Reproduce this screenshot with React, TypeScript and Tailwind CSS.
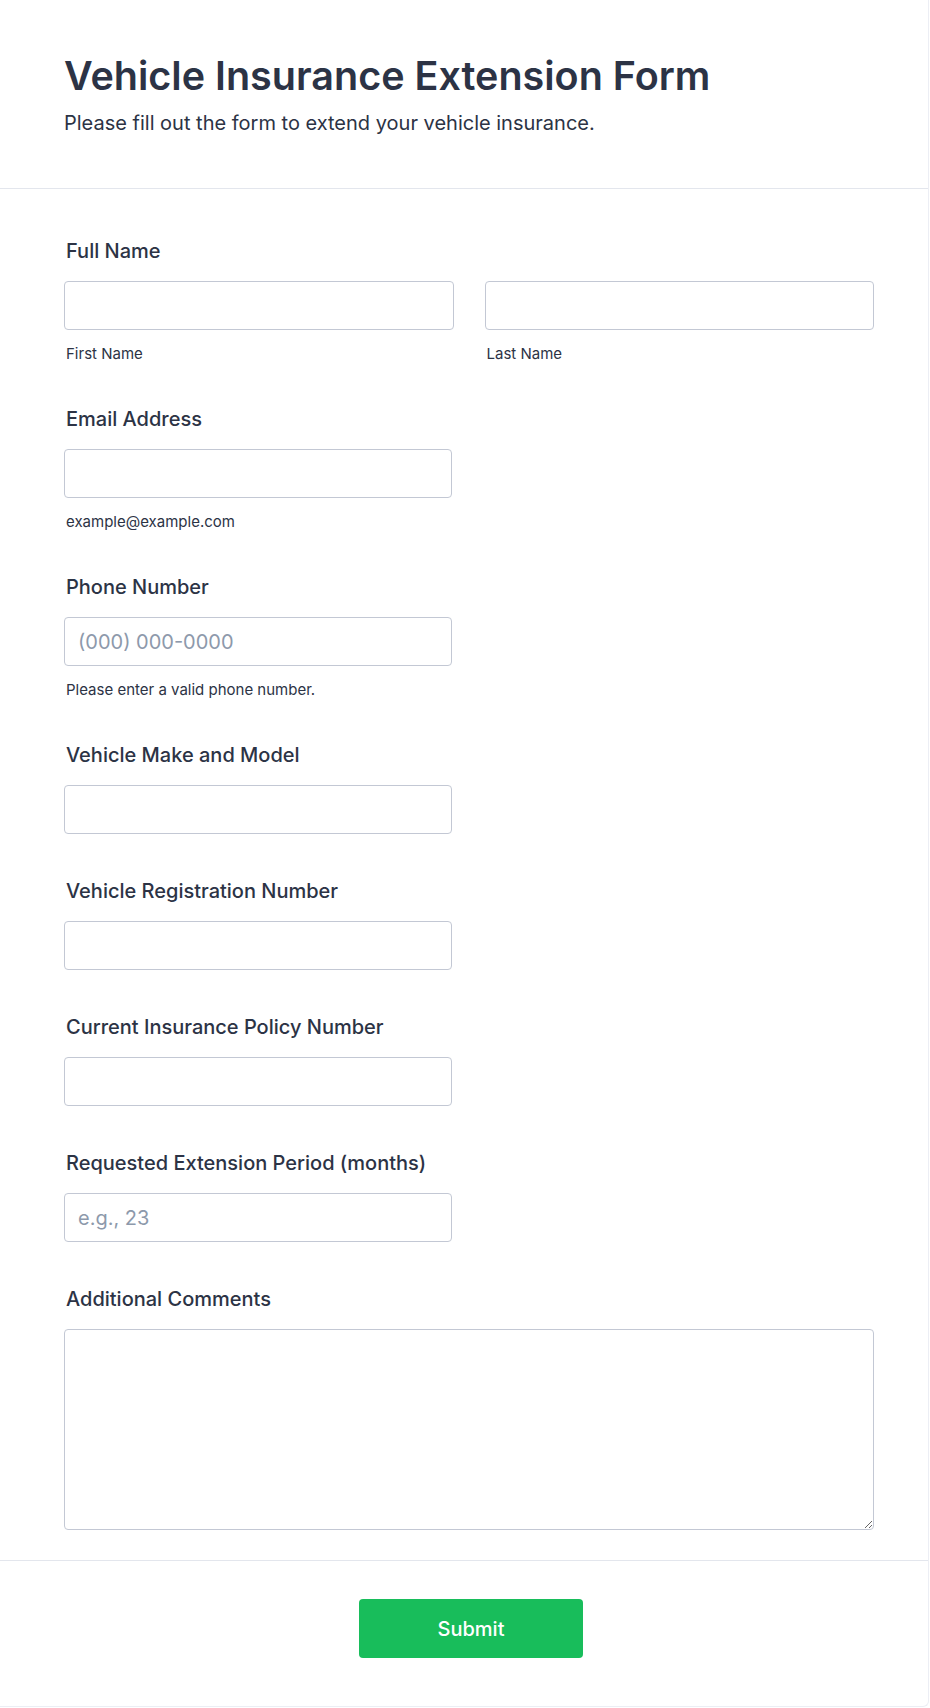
import React from "react";

const labelCls = "block pl-[2px] text-[20px] leading-[28px] font-medium text-[#2c3345] mb-4";
const inputCls =
  "block w-full h-[49px] border border-[#c3c8d4] rounded-[4px] bg-white px-[13px] text-[20px] text-[#2c3345] placeholder:text-[#8d99ab] outline-none focus:border-[#4c7dfb]";
const helperCls = "block pl-[2px] mt-4 text-[15px] leading-[16px] text-[#2c3345]";

type FieldProps = {
  label: string;
  placeholder?: string;
  helper?: string;
  type?: string;
};

const Field = ({ label, placeholder, helper, type = "text" }: FieldProps) => (
  <div>
    <label className={labelCls}>{label}</label>
    <div className="w-[388px]">
      <input type={type} placeholder={placeholder} className={inputCls} />
    </div>
    {helper && <span className={helperCls}>{helper}</span>}
  </div>
);

export default function App() {
  return (
    <div className="min-h-screen bg-white" style={{ fontFamily: "Inter, 'Noto Sans', sans-serif" }}>
      <div className="w-[929px] border-r border-b border-[#eceef4] rounded-br-md bg-white">
        {/* Header */}
        <div className="pt-[54px] pb-[51px] pl-[64px] pr-[54px] border-b border-[#e3e6ed]">
          <h1 className="text-[39.5px] leading-[44px] font-semibold text-[#2c3345]">
            Vehicle Insurance Extension Form
          </h1>
          <p className="mt-[11px] text-[20px] leading-[28px] text-[#2c3345]">
            Please fill out the form to extend your vehicle insurance.
          </p>
        </div>

        {/* Fields */}
        <div className="pt-[48px] pb-[30px] pl-[64px] pr-[54px] flex flex-col gap-[43px] border-b border-[#e3e6ed]">
          <div>
            <label className={labelCls}>Full Name</label>
            <div className="grid grid-cols-2 gap-[31px]">
              <div>
                <input type="text" className={`${inputCls} h-[48px]`} />
                <span className={helperCls}>First Name</span>
              </div>
              <div>
                <input type="text" className={`${inputCls} h-[48px]`} />
                <span className={helperCls}>Last Name</span>
              </div>
            </div>
          </div>

          <Field label="Email Address" type="email" helper="example@example.com" />
          <Field label="Phone Number" type="tel" placeholder="(000) 000-0000" helper="Please enter a valid phone number." />
          <Field label="Vehicle Make and Model" />
          <Field label="Vehicle Registration Number" />
          <Field label="Current Insurance Policy Number" />
          <Field label="Requested Extension Period (months)" type="number" placeholder="e.g., 23" />

          <div>
            <label className={labelCls}>Additional Comments</label>
            <textarea className="block w-full h-[201px] border border-[#c3c8d4] rounded-[4px] bg-white px-[13px] py-[10px] text-[20px] text-[#2c3345] outline-none" />
          </div>
        </div>

        {/* Submit */}
        <div className="pt-[38px] pb-[48px] pl-[64px] pr-[54px] flex justify-center">
          <button
            type="submit"
            className="ml-1 w-[224px] h-[59px] rounded-[4px] bg-[#18bd5b] text-white text-[20px] font-medium hover:bg-[#16aa52]"
          >
            Submit
          </button>
        </div>
      </div>
    </div>
  );
}
